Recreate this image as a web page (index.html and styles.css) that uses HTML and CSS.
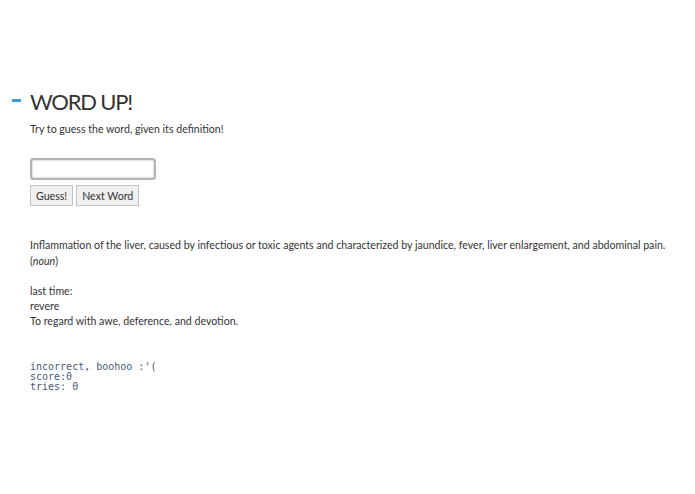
FILE: index.html
```html
<!DOCTYPE html>
<html lang="en">
<head>
    <meta charset="UTF-8">
    <title>Word Up!</title>
    <link rel="stylesheet" href="styles.css">
</head>
<body>
    <div class="container">
        <h1><span class="dash"></span>WORD UP!</h1>
        <p class="subtitle">Try to guess the word, given its definition!</p>

        <div class="guess-form">
            <input type="text" id="guess" autocomplete="off">
            <div class="buttons">
                <button id="guess-btn">Guess!</button>
                <button id="next-btn">Next Word</button>
            </div>
        </div>

        <div class="definition">
            <p>Inflammation of the liver, caused by infectious or toxic agents and characterized by jaundice, fever, liver enlargement, and abdominal pain.</p>
            <p>(<em>noun</em>)</p>
        </div>

        <div class="last-time">
            <p>last time:</p>
            <p>revere</p>
            <p>To regard with awe, deference, and devotion.</p>
        </div>

        <pre class="status">incorrect, boohoo :'(
score:0
tries: 0</pre>
    </div>
</body>
</html>
```

FILE: styles.css
```css
body {
    font-family: Lato, "Open Sans", sans-serif;
    background: #fff;
    color: #333;
    margin: 0;
}

.container {
    padding: 88px 0 0 30px;
}

h1 {
    position: relative;
    font-family: Lato, sans-serif;
    font-weight: 400;
    font-size: 22px;
    letter-spacing: -1.2px;
    line-height: 28px;
    margin: 0;
    color: #333;
}

.dash {
    position: absolute;
    left: -18px;
    top: 11px;
    width: 9px;
    height: 3px;
    background: #3a9de0;
}

.subtitle {
    margin: 6px 0 0 0;
}

.guess-form {
    margin-top: 21px;
}

input {
    display: block;
    width: 120px;
    height: 18px;
    border: 2px solid #b4b4b4;
    border-radius: 3px;
    box-shadow: inset 0 0 2px #999;
    padding: 0 1px;
    margin: 0;
}

.buttons {
    display: flex;
    gap: 3px;
    margin-top: 5px;
}

button {
    font-family: Lato, "Open Sans", sans-serif;
    font-size: 10.6px;
    color: #333;
    background: #f0f0f0;
    border: 1px solid #c4c4c4;
    padding: 0 5px;
    height: 21px;
    margin: 0;
}

.definition {
    margin-top: 31px;
}

p {
    margin: 0;
    font-size: 10.6px;
    line-height: 15px;
}

.definition p {
    line-height: 16px;
}

.last-time {
    margin-top: 15px;
}

.status {
    font-family: "DejaVu Sans Mono", monospace;
    font-size: 10px;
    line-height: 10px;
    color: #465a78;
    margin: 33px 0 0 0;
}
```
